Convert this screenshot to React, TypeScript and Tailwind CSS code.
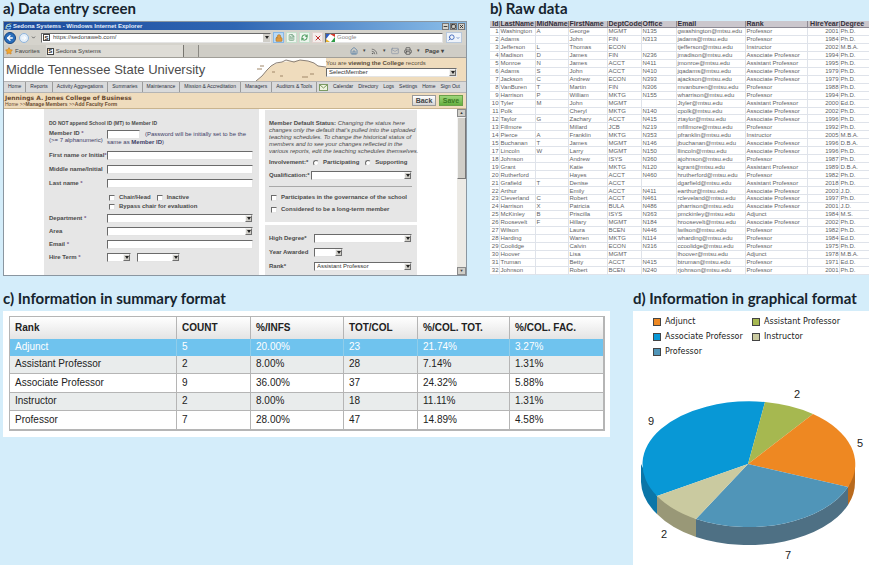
import React from "react";
import { ChevronDown, Search, Star, Lock, RefreshCw, X, Home, Rss, Mail, Printer, Minus, Square, ArrowLeft, ArrowRight, FileText } from "lucide-react";

const sans = "font-['Liberation_Sans',sans-serif]";

function Heading({ children }: { children: React.ReactNode }) {
  return (
    <h2 className="h-[21px] whitespace-nowrap font-['Lato',sans-serif] text-[15px] leading-[17px] font-bold text-[#16242e]">
      {children}
    </h2>
  );
}

const bevel = "border border-[#e4e4e4] border-t-[#6b6b6b] border-l-[#6b6b6b] bg-white";

function Select({ id, label, value = "", className = "" }: { id: string; label?: string; value?: string; className?: string }) {
  return (
    <div className={`relative h-[9px] ${className}`}>
      <select
        id={id}
        aria-label={label}
        className={`block h-full w-full appearance-none px-[2px] text-[6px] leading-[7px] font-normal text-[#333] ${bevel}`}
      >
        <option>{value}</option>
      </select>
      <span className="pointer-events-none absolute top-px right-px bottom-px flex w-[7px] items-center justify-center border border-[#f4f4f4] border-r-[#707070] border-b-[#707070] bg-[#d0cec8]">
        <svg viewBox="0 0 4 3" className="h-[3px] w-[4px]">
          <path d="M0 0h4L2 3z" fill="#222" />
        </svg>
      </span>
    </div>
  );
}

function Field({ id, label, tall = false, star = true, children }: { id: string; label: string; tall?: boolean; star?: boolean; children?: React.ReactNode }) {
  return (
    <div className={`grid grid-cols-[58px_minmax(0,1fr)] items-center ${tall ? "h-[14px]" : "h-[13px]"}`}>
      <label htmlFor={id} className="whitespace-nowrap">
        {label}
        {star && <span className="text-[#7a5a8a]">*</span>}
      </label>
      {children ?? <input id={id} type="text" className={`h-[9px] w-full text-[6px] ${bevel}`} />}
    </div>
  );
}

function Check({ label, type = "checkbox", name }: { label: string; type?: string; name?: string }) {
  return (
    <label className="flex items-center gap-1 whitespace-nowrap">
      <input
        type={type}
        name={name}
        className={`m-0 size-[6px] shrink-0 appearance-none ${bevel} ${type === "radio" ? "rounded-full" : ""}`}
      />
      {label}
    </label>
  );
}

const menus = ["Home", "Reports", "Activity Aggregations", "Summaries", "Maintenance", "Mission & Accreditation", "Managers", "Auditors & Tools"];
const links = ["Calendar", "Directory", "Logs", "Settings", "Home", "Sign Out"];

function Toolbar() {
  const tool = "flex size-[11px] items-center justify-center border";
  return (
    <div className="flex h-[15px] items-center bg-[#d5d3cc] pr-1">
      <button aria-label="Back" className="flex size-[12px] items-center justify-center rounded-full border border-[#16457f] bg-[#2a6fbd] text-white">
        <ArrowLeft size={8} strokeWidth={4} />
      </button>
      <button aria-label="Forward" className="ml-[3px] flex size-[10px] items-center justify-center rounded-full border border-[#8fb4dc] bg-[#e3eef9] text-white">
        <ArrowRight size={6} strokeWidth={4} />
      </button>
      <ChevronDown size={5} strokeWidth={4} className="ml-[2px] text-[#555]" />
      <div className={`ml-[5px] flex h-[10px] min-w-0 flex-1 items-center ${bevel}`}>
        <span className="ml-px flex size-[7px] items-center justify-center border border-[#444] text-[6px] leading-[6px] font-bold text-[#222]">S</span>
        <input aria-label="Address" defaultValue="https://sedonaweb.com/" className="ml-[3px] h-[8px] min-w-0 flex-1 text-[6px] text-[#444]" />
        <span className="flex h-[8px] w-[7px] items-center justify-center bg-[#d0cec8]">
          <svg viewBox="0 0 4 3" className="h-[3px] w-[4px]"><path d="M0 0h4L2 3z" fill="#222" /></svg>
        </span>
      </div>
      <div className="ml-[2px] flex gap-[2px]">
        <button aria-label="Security" className={`${tool} border-[#86b8e8] bg-[#b9d9f5] text-[#b37a2a]`}><Lock size={8} fill="#e09a3c" /></button>
        <button aria-label="Compatibility" className={`${tool} border-[#c4e0cc] bg-[#edf5ee] text-[#4e8a60]`}><FileText size={7} /></button>
        <button aria-label="Refresh" className={`${tool} border-[#c4e0cc] bg-[#edf5ee] text-[#2c8a44]`}><RefreshCw size={7} strokeWidth={3} /></button>
        <button aria-label="Stop" className={`${tool} border-[#e3d3d0] bg-[#f4eeec] text-[#c02a2a]`}><X size={8} strokeWidth={3} /></button>
      </div>
      <div className={`ml-[2px] flex h-[10px] w-[118px] items-center ${bevel}`}>
        <svg viewBox="0 0 9 8" className="h-[8px] w-[9px]">
          <rect width="9" height="8" fill="#fff" />
          <path d="M0 0h4L0 5z" fill="#2f5ec4" />
          <path d="M4 0h5v3z" fill="#d63a2c" />
          <path d="M9 3v5H5z" fill="#2e9b45" />
          <path d="M0 5l4 3H0z" fill="#e8b32c" />
        </svg>
        <input aria-label="Search" placeholder="Google" className="ml-[2px] h-[8px] min-w-0 flex-1 text-[6px] placeholder:text-[#888]" />
      </div>
      <button aria-label="Go" className="ml-[3px] flex h-[11px] w-[16px] items-center gap-px border border-[#b8c8dc] bg-[#eef3fa] px-px text-[#3a62b8]">
        <Search size={7} strokeWidth={3} className="-scale-x-100" />
        <ChevronDown size={4} strokeWidth={4} />
      </button>
    </div>
  );
}

function TabBar() {
  return (
    <div className="flex h-[13px] items-center border-b border-[#a09e98] bg-[#cfcdc6] pr-[22px] text-[6px] text-[#444]">
      <Star size={8} fill="#f0a830" className="ml-px text-[#c9822a]" />
      <span className="ml-[2px]">Favorites</span>
      <div className="ml-[6px] flex h-[12px] w-[138px] items-center gap-[2px] border-r border-[#77756f] bg-[#dedcd6] pl-px">
        <span className="flex size-[7px] items-center justify-center border border-[#444] bg-white text-[6px] leading-[6px] font-bold text-[#222]">S</span>
        Sedona Systems
      </div>
      <div className="h-[12px] w-[15px] border-r border-[#8a8882]" />
      <div className="ml-auto flex items-center gap-[5px]">
        <Home size={8} className="text-[#3f6f9f]" />
        <span className="text-[5px]">▾</span>
        <Rss size={7} />
        <span className="text-[5px]">▾</span>
        <Mail size={8} className="text-[#8a94a4]" />
        <Printer size={8} />
        <span className="text-[5px]">▾</span>
        <span className="text-[6px] font-bold">Page ▾</span>
      </div>
    </div>
  );
}

function Banner() {
  return (
    <header className="flex h-[23px] overflow-hidden bg-white">
      <h1 className="self-center pl-[2px] text-[13px] leading-[15px] whitespace-nowrap text-[#4c4c4c]">Middle Tennessee State University</h1>
      <svg viewBox="0 0 74 23" className="ml-auto h-[23px] w-[74px] shrink-0">
        <path d="M4 23L10 18 15 12 20 7 30 4 40 3 50 2 60 4 67 8 74 9V23z" fill="#efdcbd" />
        <path d="M4 23L10 18 15 12 19 8 24 5 30 4 34 2 42 4 48 2 56 3 62 5 66 8 74 9" fill="none" stroke="#8b8178" strokeWidth="1" />
        <path d="M5 11h5M8 8h4M20 14h3M28 18h3M50 19h6M58 16h4" stroke="#a08768" strokeWidth="1" />
      </svg>
      <div className="w-[140px] shrink-0 bg-[#efdcbd] pt-[2px] text-[6px] leading-[7px]">
        <label htmlFor="member" className="block whitespace-nowrap text-[#5a4d3a]">
          You are <b>viewing the College</b> records
        </label>
        <Select id="member" value="SelectMember" className="mt-px w-[131px]" />
      </div>
    </header>
  );
}

function Browser() {
  const winButton = "flex h-[7px] w-[7px] items-center justify-center border border-[#777] bg-[#d5d3cc] text-[#222]";
  return (
    <div className={`${sans} flex h-[255px] flex-col overflow-hidden border border-[#8a96a0] bg-white text-[#3a3a3a]`}>
      <div className="flex h-[8px] shrink-0 items-center bg-linear-to-r from-[#1b4a9c] via-[#2f66b3] to-[#8dc0ea] pl-px text-[6px] leading-[8px] font-bold text-[#e6f0fb]">
        <svg viewBox="0 0 8 8" className="mr-px size-[7px]">
          <path d="M6.500 5.500A2.700 2.700 0 1 1 6.700 4H2" fill="none" stroke="#7ec4f4" strokeWidth="1.300" />
          <path d="M.5 7C1 3 5 0 7.500 1" fill="none" stroke="#e8c34a" strokeWidth=".7" />
        </svg>
        Sedona Systems - Windows Internet Explorer
        <span className="ml-auto flex gap-px pr-px">
          <button aria-label="Minimize" className={winButton}><Minus size={5} strokeWidth={4} /></button>
          <button aria-label="Maximize" className={winButton}><Square size={5} strokeWidth={4} /></button>
          <button aria-label="Close" className={winButton}><X size={5} strokeWidth={4} /></button>
        </span>
      </div>
      <Toolbar />
      <TabBar />
      <Banner />
      <nav className="flex h-[12px] shrink-0 items-center border-y border-[#b4b4b4] bg-[#d9dadb] text-[5px] whitespace-nowrap text-[#2c3040]">
        {menus.map((m) => (
          <a key={m} href="#" className="flex h-full items-center border-r border-[#9b9b9b] px-[4px]">{m}</a>
        ))}
        <div className="ml-auto flex items-center gap-[5px] pr-[6px]">
          <svg viewBox="0 0 9 7" className="h-[7px] w-[9px]">
            <rect x=".5" y=".5" width="8" height="6" fill="#eef3df" stroke="#7c9a62" />
            <path d="M1 1l3.500 3L8 1" fill="none" stroke="#7c9a62" />
          </svg>
          {links.map((l) => (
            <a key={l} href="#">{l}</a>
          ))}
        </div>
      </nav>
      <div className="flex h-[16px] shrink-0 items-center justify-between border-b border-[#c9b48f] bg-[#efdcbd] pr-[3px] pl-px">
        <div className="text-[6px] leading-[7px] text-[#6a4a30]">
          <div className="font-['DejaVu_Sans',sans-serif] font-bold">Jennings A. Jones College of Business</div>
          <div className="text-[5px]">Home &gt;&gt;<b>Manage Members</b> &gt;&gt;<b>Add Faculty Form</b></div>
        </div>
        <div className="flex gap-[3px] text-[7px] leading-[8px] font-bold">
          <button className="h-[11px] w-[24px] border border-[#9a9a9a] bg-linear-to-b from-white to-[#d4d4d4] text-[#444]">Back</button>
          <button className="h-[11px] w-[24px] border border-[#6ba04a] bg-linear-to-b from-[#9fd67a] to-[#65b03e] text-[#3b7a22]">Save</button>
        </div>
      </div>
      <div className="flex min-h-0 flex-1">
        <form className="flex min-w-0 flex-1 gap-[6px] pr-[40px] pl-[40px] text-[6px] leading-[7px] font-bold text-[#4a4a4a]">
          <section className="min-w-0 flex-1 bg-[#e6e6e6] pt-[11px] pr-[6px] pl-[5px]">
            <p className="whitespace-nowrap text-[5px]">DO NOT append School ID (MT) to Member ID</p>
            <div className="mt-[3px] mb-[2px] grid h-[16px] grid-cols-[58px_minmax(0,1fr)]">
              <label htmlFor="mid">Member ID <span className="text-[#7a5a8a]">*</span><br /><span className="font-normal whitespace-nowrap text-[#3d3d66]">(&gt;= 7 alphanumeric)</span></label>
              <div className="text-[#3d3d66]">
                <div className="flex items-center gap-[5px] font-normal whitespace-nowrap">
                  <input id="mid" type="text" className={`h-[9px] w-[33px] ${bevel}`} />
                  (Password will be initially set to be the
                </div>
                <p className="leading-[6px] font-normal">same as <b>Member ID</b>)</p>
              </div>
            </div>
            <Field id="first" label="First name or Initial" tall />
            <Field id="middle" label="Middle name/Initial" tall star={false} />
            <Field id="last" label="Last name " tall />
            <div className="mt-[4px] mb-[2px] flex flex-col gap-[2px] pl-[60px]">
              <div className="flex gap-[6px]">
                <Check label="Chair/Head" />
                <Check label="Inactive" />
              </div>
              <Check label="Bypass chair for evaluation" />
            </div>
            <Field id="dept" label="Department "><Select id="dept" /></Field>
            <Field id="area" label="Area" star={false}><Select id="area" /></Field>
            <Field id="email" label="Email " />
            <Field id="term" label="Hire Term ">
              <div className="flex gap-[6px]">
                <Select id="term" className="w-[24px]" />
                <Select id="termyear" label="Hire year" className="w-[43px]" />
              </div>
            </Field>
          </section>
          <div className="flex w-[152px] shrink-0 flex-col gap-[3px] pt-px">
            <section className="h-[112px] bg-[#e6e6e6] pt-[10px] pr-[5px] pl-[4px]">
              <p className="font-normal whitespace-nowrap italic">
                <b className="not-italic">Member Default Status:</b> Changing the status here<br />
                changes only the default that’s pulled into the uploaded<br />
                teaching schedules. To change the historical status of<br />
                members and to see your changes reflected in the<br />
                various reports, edit the teaching schedules themselves.
              </p>
              <div className="mt-[3px] flex h-[9px] items-center gap-[6px]">
                <span className="w-[38px]">Involvement:*</span>
                <Check label="Participating" type="radio" name="inv" />
                <Check label="Supporting" type="radio" name="inv" />
              </div>
              <div className="mt-[2px] grid h-[12px] grid-cols-[42px_minmax(0,1fr)] items-center">
                <label htmlFor="qual">Qualification:*</label>
                <Select id="qual" />
              </div>
              <hr className="my-[5px] border-[#a8a8a8]" />
              <div className="flex flex-col gap-[5px] pt-[2px] pl-[2px]">
                <Check label="Participates in the governance of the school" />
                <Check label="Considered to be a long-term member" />
              </div>
            </section>
            <section className="grid flex-1 grid-cols-[45px_minmax(0,1fr)] content-start items-center gap-y-[5px] bg-[#e6e6e6] pt-[9px] pr-[5px] pl-[4px] whitespace-nowrap">
              <label htmlFor="degree">High Degree*</label>
              <Select id="degree" />
              <label htmlFor="year">Year Awarded</label>
              <Select id="year" className="w-[29px]" />
              <label htmlFor="rank">Rank*</label>
              <Select id="rank" value="Assistant Professor" />
            </section>
          </div>
        </form>
        <div className="flex w-[9px] flex-col justify-between bg-[#eceae5]">
          <div>
            <div className="flex h-[8px] items-center justify-center border border-[#8a8a8a] bg-[#d0cec8] text-[4px]">▲</div>
            <div className="h-[62px] border border-[#f4f4f4] border-r-[#777] border-b-[#777] bg-[#d0cec8]" />
          </div>
          <div className="flex h-[8px] items-center justify-center border border-[#8a8a8a] bg-[#d0cec8] text-[4px]">▼</div>
        </div>
      </div>
    </div>
  );
}

const A = "Associate Professor";
const S = "Assistant Professor";
const P = "Professor";
const rawHead = ["Id", "LastName", "MidName", "FirstName", "DeptCode", "Office", "Email", "Rank", "HireYear", "Degree"];
const rawRows: (string | number)[][] = [
  [1, "Washington", "A", "George", "MGMT", "N135", "gwashington@mtsu.edu", P, 2001, "Ph.D."],
  [2, "Adams", "", "John", "FIN", "N313", "jadams@mtsu.edu", P, 1984, "Ph.D."],
  [3, "Jefferson", "L", "Thomas", "ECON", "", "tjefferson@mtsu.edu", "Instructor", 2002, "M.B.A."],
  [4, "Madison", "D", "James", "FIN", "N236", "jmadison@mtsu.edu", A, 1994, "Ph.D."],
  [5, "Monroe", "N", "James", "ACCT", "N411", "jmonroe@mtsu.edu", S, 1995, "Ph.D."],
  [6, "Adams", "S", "John", "ACCT", "N410", "jqadams@mtsu.edu", A, 1979, "Ph.D."],
  [7, "Jackson", "C", "Andrew", "ECON", "N393", "ajackson@mtsu.edu", A, 1979, "Ph.D."],
  [8, "VanBuren", "T", "Martin", "FIN", "N306", "mvanburen@mtsu.edu", P, 1988, "Ph.D."],
  [9, "Harrison", "P", "William", "MKTG", "N155", "wharrison@mtsu.edu", P, 1994, "Ph.D."],
  [10, "Tyler", "M", "John", "MGMT", "", "Jtyler@mtsu.edu", S, 2000, "Ed.D."],
  [11, "Polk", "", "Cheryl", "MKTG", "N140", "cpolk@mtsu.edu", A, 2002, "Ph.D."],
  [12, "Taylor", "G", "Zachary", "ACCT", "N415", "ztaylor@mtsu.edu", A, 1996, "Ph.D."],
  [13, "Fillmore", "", "Millard", "JCB", "N219", "mfillmore@mtsu.edu", P, 1992, "Ph.D."],
  [14, "Pierce", "A", "Franklin", "MKTG", "N353", "pfranklin@mtsu.edu", "Instructor", 2005, "M.B.A."],
  [15, "Buchanan", "T", "James", "MGMT", "N146", "jbuchanan@mtsu.edu", A, 1996, "D.B.A."],
  [17, "Lincoln", "W", "Larry", "MGMT", "N150", "llincoln@mtsu.edu", A, 1996, "Ph.D."],
  [18, "Johnson", "", "Andrew", "ISYS", "N360", "ajohnson@mtsu.edu", P, 1987, "Ph.D."],
  [19, "Grant", "", "Katie", "MKTG", "N120", "kgrant@mtsu.edu", S, 1989, "D.B.A."],
  [20, "Rutherford", "", "Hayes", "ACCT", "N460", "hrutherford@mtsu.edu", P, 1982, "Ph.D."],
  [21, "Grafield", "T", "Denise", "ACCT", "", "dgarfield@mtsu.edu", S, 2018, "Ph.D."],
  [22, "Arthur", "", "Emily", "ACCT", "N411", "earthur@mtsu.edu", A, 2003, "J.D."],
  [23, "Cleverland", "C", "Robert", "ACCT", "N461", "rcleveland@mtsu.edu", A, 1997, "Ph.D."],
  [24, "Harrison", "X", "Patricia", "BULA", "N486", "pharrison@mtsu.edu", A, 2001, "J.D."],
  [25, "McKinley", "B", "Priscilla", "ISYS", "N363", "pmckinley@mtsu.edu", "Adjunct", 1984, "M.S."],
  [26, "Roosevelt", "F", "Hillary", "MGMT", "N184", "hroosevelt@mtsu.edu", A, 2002, "Ph.D."],
  [27, "Wilson", "", "Laura", "BCEN", "N446", "lwilson@mtsu.edu", P, 1982, "Ph.D."],
  [28, "Harding", "", "Warren", "MKTG", "N114", "wharding@mtsu.edu", P, 1984, "Ed.D."],
  [29, "Coolidge", "", "Calvin", "ECON", "N316", "ccoolidge@mtsu.edu", P, 1975, "Ph.D."],
  [30, "Hoover", "", "Lisa", "MGMT", "", "lhoover@mtsu.edu", "Adjunct", 1978, "M.B.A."],
  [31, "Truman", "", "Betty", "ACCT", "N415", "btruman@mtsu.edu", P, 1971, "Ed.D."],
  [32, "Johnson", "", "Robert", "BCEN", "N240", "rjohnson@mtsu.edu", P, 2001, "Ph.D."],
];
const right = (i: number) => (i === 0 || i === 8 ? "text-right" : "text-left pl-px");

function RawTable() {
  return (
    <table className={`${sans} h-[254px] w-full table-fixed border-collapse bg-white text-[6px] leading-[6px] text-[#5f5f66]`}>
      <colgroup>
        <col className="w-[9px]" />
        <col className="w-[36px]" />
        <col className="w-[33px]" />
        <col className="w-[39px]" />
        <col className="w-[34px]" />
        <col className="w-[35px]" />
        <col className="w-[69px]" />
        <col className="w-[62px]" />
        <col className="w-[32px]" />
        <col className="w-[30px]" />
      </colgroup>
      <thead>
        <tr className="bg-[#cbc7cd] text-[7px] text-[#33303c]">
          {rawHead.map((h, i) => (
            <th key={h} className={`border-r border-b border-[#8d8a94] py-0 pr-0 font-bold ${right(i)}`}>{h}</th>
          ))}
        </tr>
      </thead>
      <tbody>
        {rawRows.map((r) => (
          <tr key={r[0]}>
            {r.map((c, i) => (
              <td key={i} className={`border-r border-b border-[#dfe3ea] py-0 pr-0 whitespace-nowrap ${right(i)}`}>{c}</td>
            ))}
          </tr>
        ))}
      </tbody>
    </table>
  );
}

const sumHead = ["Rank", "COUNT", "%/INFS", "TOT/COL", "%/COL. TOT.", "%/COL. FAC."];
const sumRows = [
  ["Adjunct", "5", "20.00%", "23", "21.74%", "3.27%"],
  ["Assistant Professor", "2", "8.00%", "28", "7.14%", "1.31%"],
  ["Associate Professor", "9", "36.00%", "37", "24.32%", "5.88%"],
  ["Instructor", "2", "8.00%", "18", "11.11%", "1.31%"],
  ["Professor", "7", "28.00%", "47", "14.89%", "4.58%"],
];

function Summary() {
  return (
    <div className="bg-white px-[6px] pt-[5px] pb-[6px]">
      <table className={`${sans} h-[115px] w-full table-fixed border-collapse border border-r-2 border-b-2 border-[#b5b5b5] text-left text-[10px] leading-[12px] text-[#222]`}>
        <colgroup>
          <col className="w-[167px]" />
          <col className="w-[74px]" />
          <col className="w-[93px]" />
          <col className="w-[74px]" />
          <col className="w-[92px]" />
          <col className="w-[94px]" />
        </colgroup>
        <thead>
          <tr className="h-[22px] bg-linear-to-b from-white to-[#e4e4e4]">
            {sumHead.map((h) => (
              <th key={h} className="border-r border-[#b5b5b5] p-0 pl-[5px] font-bold">{h}</th>
            ))}
          </tr>
        </thead>
        <tbody>
          {sumRows.map((r, n) => (
            <tr key={r[0]} className={n === 0 ? "bg-[#6fc3ee] text-white" : n % 2 ? "border-b border-[#b5b5b5] bg-[#e9ecec]" : "border-b border-[#b5b5b5] bg-white"}>
              {r.map((c, i) => (
                <td key={i} className={`border-r p-0 pl-[5px] ${n === 0 ? "border-[#8fcdea]" : "border-[#b5b5b5]"}`}>{c}</td>
              ))}
            </tr>
          ))}
        </tbody>
      </table>
    </div>
  );
}

const legend = [
  ["Adjunct", "bg-[#ee8822]"],
  ["Assistant Professor", "bg-[#a6b850]"],
  ["Associate Professor", "bg-[#0898d6]"],
  ["Instructor", "bg-[#cacaa0]"],
  ["Professor", "bg-[#5095b8]"],
];

function Chart() {
  return (
    <div className="flex flex-1 flex-col bg-white pt-[3px]">
      <ul className="ml-[20px] grid grid-cols-[99px_minmax(0,1fr)] font-['DejaVu_Sans',sans-serif] text-[8px] leading-[15px] whitespace-nowrap text-[#222]">
        {legend.map(([name, color]) => (
          <li key={name} className="flex items-center gap-[4px]">
            <span className={`size-[8px] shrink-0 border border-[#444] ${color}`} />
            {name}
          </li>
        ))}
      </ul>
      <svg viewBox="633 359 236 206" className="w-full" role="img" aria-label="Faculty by rank">
        <path d="M641 464V482A107 63 0 0 0 657 514V496z" fill="#0b76a8" />
        <path d="M657 496V514A107 63 0 0 0 696 537V519z" fill="#999877" />
        <path d="M696 519V537A107 63 0 0 0 848 505V487A107 63 0 0 1 696 519z" fill="#4e7084" />
        <path d="M848 487V505A107 63 0 0 0 855 482V464z" fill="#b96a1d" />
        <path d="M748 464L657 496A107 63 0 0 1 765 402z" fill="#0898d6" />
        <path d="M748 464L765 402A107 63 0 0 1 813 414z" fill="#a6b850" />
        <path d="M748 464L813 414A107 63 0 0 1 848 487z" fill="#ee8822" />
        <path d="M748 464L848 487A107 63 0 0 1 696 519z" fill="#5095b8" />
        <path d="M748 464L696 519A107 63 0 0 1 657 496z" fill="#cacaa0" />
        <g className={sans} fontSize="11" fill="#222" textAnchor="middle">
          <text x="651" y="425">9</text>
          <text x="797" y="398">2</text>
          <text x="860" y="447">5</text>
          <text x="664" y="538">2</text>
          <text x="788" y="559">7</text>
        </g>
      </svg>
    </div>
  );
}

export default function App() {
  return (
    <main className="flex min-h-screen flex-col gap-[14px] bg-[#d4edfa] pl-[3px]">
      <div className="grid grid-cols-[minmax(0,464fr)_minmax(0,379fr)] gap-[23px]">
        <section>
          <Heading>a) Data entry screen</Heading>
          <Browser />
        </section>
        <section>
          <Heading>b) Raw data</Heading>
          <RawTable />
        </section>
      </div>
      <div className="grid flex-1 grid-cols-[minmax(0,607fr)_minmax(0,236fr)] gap-[23px]">
        <section>
          <Heading>c) Information in summary format</Heading>
          <Summary />
        </section>
        <section className="flex flex-col">
          <Heading>d) Information in graphical format</Heading>
          <Chart />
        </section>
      </div>
    </main>
  );
}
